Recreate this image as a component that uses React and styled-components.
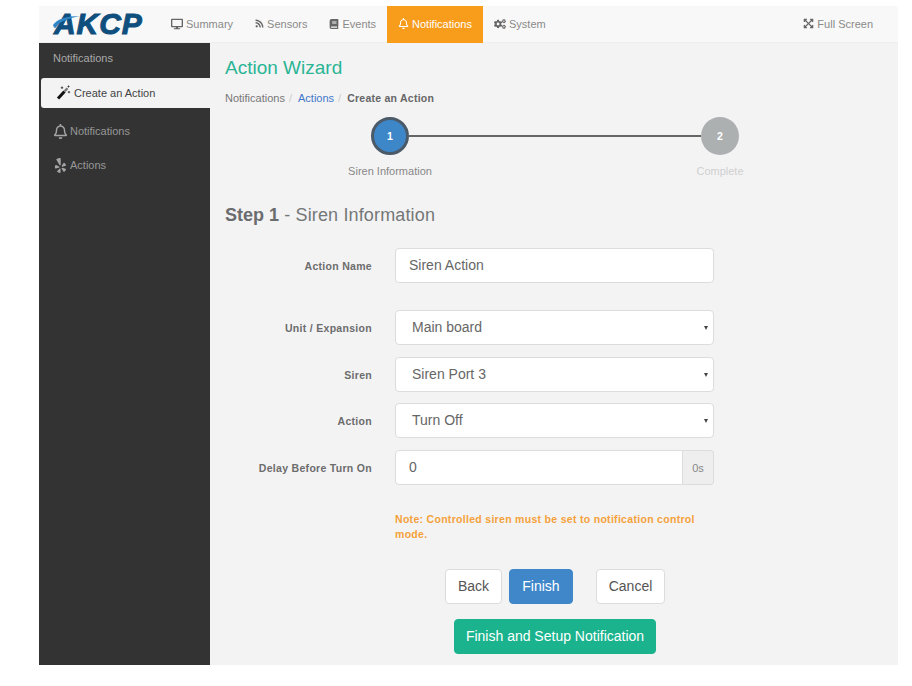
import React from "react";
import styled, { createGlobalStyle } from "styled-components";
import { FaDesktop, FaRss, FaBook, FaRegBell, FaCogs, FaExpandArrowsAlt, FaYelp } from "react-icons/fa";

const Global = createGlobalStyle`
  html, body { margin: 0; background: #fff; }
  body { font-family: "Liberation Sans", Arial, sans-serif; color: #676a6c; }
  * { box-sizing: border-box; }
`;

const Page = styled.div`
  width: 912px; height: 686px; padding: 6px 14px 21px 39px; overflow: hidden;
`;
const Shell = styled.div`
  height: 659px; display: flex; flex-direction: column; background: #f3f3f4;
  border-top-right-radius: 4px;
`;
const TopBar = styled.header`
  height: 37px; display: flex; align-items: stretch; background: #f8f8f8; flex: none;
  border-bottom: 1px solid #eee; border-top-right-radius: 4px; padding-left: 12px; padding-right: 14px;
`;
const Logo = styled.div`
  position: relative; width: 109px; display: flex; align-items: center; flex: none; padding-bottom: 1px;
  font: italic 700 30px/1 "Liberation Sans", Arial, sans-serif; color: #0f4f7d;
  letter-spacing: 0.9px; -webkit-text-stroke: 1px #0f4f7d;
  span { margin-left: 3px; }
  svg { position: absolute; left: 1px; top: 9px; }
`;
const NavList = styled.nav`
  display: flex; align-items: stretch; flex: 1; height: 37px;
`;
const NavItem = styled.a`
  display: flex; align-items: center; gap: 3px; height: 37px; font-size: 11px; padding: 0 11px 2px;
  color: ${p => (p.$active ? "#fff" : "#8a8a8a")};
  background: ${p => (p.$active ? "#f89c1c" : "transparent")};
  svg { color: ${p => (p.$active ? "#fff" : "#666")}; }
`;
const Body = styled.div`
  flex: 1; display: flex; min-height: 0;
`;
const Sidebar = styled.aside`
  width: 171px; flex: none; background: #333; padding-top: 9px; color: #aaa;
`;
const SideHeading = styled.div`
  font-size: 11px; line-height: 13px; padding-left: 14px; color: #a9a9a9; height: 26px;
`;
const ActiveTab = styled.a`
  display: flex; align-items: center; gap: 3px; height: 30px; margin-left: 2px; padding: 0 0 1px 15px;
  background: #f3f3f4; color: #444; font-size: 11px; border-radius: 3px 0 0 3px;
`;
const SideList = styled.div`
  padding-top: 6px; display: flex; flex-direction: column;
`;
const SideItem = styled.a`
  display: flex; align-items: center; gap: 2px; height: 34px; padding-left: 14px;
  font-size: 11px; color: #979797;
  svg { color: #a5a5a5; }
`;
const Main = styled.main`
  flex: 1; padding: 14px 0 0 15px; min-width: 0;
`;
const Title = styled.h1`
  margin: 0; font-size: 19px; font-weight: 400; line-height: 22px; color: #2bb594;
`;
const Crumbs = styled.div`
  display: flex; align-items: center; margin-top: 13px; font-size: 11px; line-height: 13px; color: #777;
`;
const CrumbLink = styled.a`
  color: ${p => p.$link ? "#3f78c8" : "#777"};
`;
const CrumbSep = styled.span`
  color: #ccc; margin: 0 6px 0 4px;
`;
const CrumbNow = styled.b`
  color: #666; font-size: 10.5px; letter-spacing: 0.25px;
`;
const Stepper = styled.div`
  display: grid; grid-template-columns: 100px 230px 100px; margin: 12px 0 0 115px; width: 430px;
`;
const Step = styled.div`
  display: flex; flex-direction: column; align-items: center;
`;
const Circle = styled.div`
  width: 38px; height: 38px; border-radius: 50%; display: flex; align-items: center; justify-content: center;
  font-size: 10.5px; font-weight: 700; color: #fff;
  background: ${p => (p.$on ? "#3d87c9" : "#adb0b1")};
  border: ${p => (p.$on ? "3px solid #4b5a68" : "none")};
`;
const StepLabel = styled.div`
  margin-top: 10px; font-size: 11px; line-height: 13px; color: ${p => (p.$on ? "#888" : "#d0d0d0")};
`;
const Connector = styled.div`
  height: 2px; background: #666; margin: 18px -31px 0;
`;
const StepTitle = styled.h2`
  margin: 26px 0 0; font-size: 18px; line-height: 22px; font-weight: 400; color: #747778; letter-spacing: 0.15px;
  b { color: #6a6c6e; letter-spacing: 0; }
`;
const Form = styled.form`
  margin-top: 22px; display: flex; flex-direction: column;
`;
const Row = styled.div`
  display: flex; align-items: center; margin-bottom: ${p => p.$mb ?? 12}px;
`;
const Label = styled.label`
  width: 148px; flex: none; text-align: right; font-size: 10.5px; font-weight: 700; color: #6c6c6c;
  margin-right: 23px; letter-spacing: 0.3px; margin-left: -1px;
`;
const Field = styled.input`
  width: ${p => p.$w || 319}px; height: 35px; border: 1px solid #dcdcdc; background: #fff; font: 14px "Liberation Sans", Arial, sans-serif;
  color: #666; padding: 0 13px 2px; border-radius: ${p => p.$flat ? "4px 0 0 4px" : "4px"}; outline: none;
`;
const SelectWrap = styled.div`
  position: relative; width: 319px; height: 35px;
  &::after {
    content: ""; position: absolute; right: 6px; top: 16px; border-style: solid; border-width: 4px 2.5px 0;
    border-color: #444 transparent transparent;
  }
`;
const Select = styled.select`
  appearance: none; width: 100%; height: 35px; border: 1px solid #dcdcdc; background: #fff; font: 14px "Liberation Sans", Arial, sans-serif;
  color: #666; padding: 0 16px 2px; border-radius: 4px; outline: none;
`;
const Addon = styled.div`
  width: 31px; height: 35px; display: flex; align-items: center; justify-content: center; font-size: 11px; color: #888;
  background: #eee; border: 1px solid #dcdcdc; border-left: none; border-radius: 0 4px 4px 0;
`;
const Note = styled.p`
  margin: 27px 0 0 170px; width: 319px; font-size: 10.5px; line-height: 15px; font-weight: 700; color: #f5a13a; letter-spacing: 0.3px;
`;
const Buttons = styled.div`
  display: flex; margin: 27px 0 0 220px;
`;
const Button = styled.button`
  height: 35px; padding: 0 0 2px; width: ${p => p.$w}px; margin-right: ${p => p.$mr || 0}px; border-radius: 4px;
  font: 14px "Liberation Sans", Arial, sans-serif;
  color: ${p => (p.$bg ? "#fff" : "#555")}; background: ${p => p.$bg || "#fff"};
  border: 1px solid ${p => p.$bg || "#dcdcdc"};
`;
const Primary = styled(Button)`
  display: block; margin: 15px 0 0 229px;
`;

const Swoosh = () => (
  <svg width="34" height="16" viewBox="0 0 34 16" fill="none">
    <path d="M1 10C5 4 15 1 28 1C18 3 8 6 5 11C4 13 3 13 2 12.5Z" fill="#2f86c6" />
  </svg>
);

const Wand = () => (
  <svg width="15" height="15" viewBox="0 0 15 15" fill="none">
    <path d="M2 13.5L8.5 6.5" stroke="#111" strokeWidth="3" />
    <path d="M8.7 6.3L11.5 3.3" stroke="#777" strokeWidth="2.4" />
    <path d="M6 1.5V4M4.8 2.7H7.2M13 6V8.2M11.9 7.1H14.1M12.5 .5V2.5M11.5 1.5H13.5" stroke="#333" strokeWidth="0.9" />
  </svg>
);

export default function App() {
  return (
    <Page>
      <Global />
      <Shell>
        <TopBar>
          <Logo><Swoosh /><span>AKCP</span></Logo>
          <NavList>
            <NavItem><FaDesktop size={12} />Summary</NavItem>
            <NavItem><FaRss size={9} />Sensors</NavItem>
            <NavItem><FaBook size={10} />Events</NavItem>
            <NavItem $active><FaRegBell size={11} />Notifications</NavItem>
            <NavItem><FaCogs size={12} />System</NavItem>
          </NavList>
          <NavItem><FaExpandArrowsAlt size={11} />Full Screen</NavItem>
        </TopBar>
        <Body>
          <Sidebar>
            <SideHeading>Notifications</SideHeading>
            <ActiveTab><Wand />Create an Action</ActiveTab>
            <SideList>
              <SideItem><FaRegBell size={15} />Notifications</SideItem>
              <SideItem><FaYelp size={15} />Actions</SideItem>
            </SideList>
          </Sidebar>
          <Main>
            <Title>Action Wizard</Title>
            <Crumbs>
              <CrumbLink>Notifications</CrumbLink><CrumbSep>/</CrumbSep>
              <CrumbLink $link>Actions</CrumbLink><CrumbSep>/</CrumbSep>
              <CrumbNow>Create an Action</CrumbNow>
            </Crumbs>
            <Stepper>
              <Step><Circle $on>1</Circle><StepLabel $on>Siren Information</StepLabel></Step>
              <Connector />
              <Step><Circle>2</Circle><StepLabel>Complete</StepLabel></Step>
            </Stepper>
            <StepTitle><b>Step 1</b> - Siren Information</StepTitle>
            <Form>
              <Row $mb={27}><Label>Action Name</Label><Field defaultValue="Siren Action" /></Row>
              <Row><Label>Unit / Expansion</Label><SelectWrap><Select><option>Main board</option></Select></SelectWrap></Row>
              <Row $mb={11}><Label>Siren</Label><SelectWrap><Select><option>Siren Port 3</option></Select></SelectWrap></Row>
              <Row><Label>Action</Label><SelectWrap><Select><option>Turn Off</option></Select></SelectWrap></Row>
              <Row $mb={0}><Label>Delay Before Turn On</Label><Field $w={288} $flat defaultValue="0" /><Addon>0s</Addon></Row>
              <Note>Note: Controlled siren must be set to notification control mode.</Note>
              <Buttons>
                <Button type="button" $w={57} $mr={7}>Back</Button>
                <Button type="button" $w={64} $mr={23} $bg="#3f87c9">Finish</Button>
                <Button type="button" $w={69}>Cancel</Button>
              </Buttons>
              <Primary type="button" $w={202} $bg="#1ab38d">Finish and Setup Notification</Primary>
            </Form>
          </Main>
        </Body>
      </Shell>
    </Page>
  );
}
